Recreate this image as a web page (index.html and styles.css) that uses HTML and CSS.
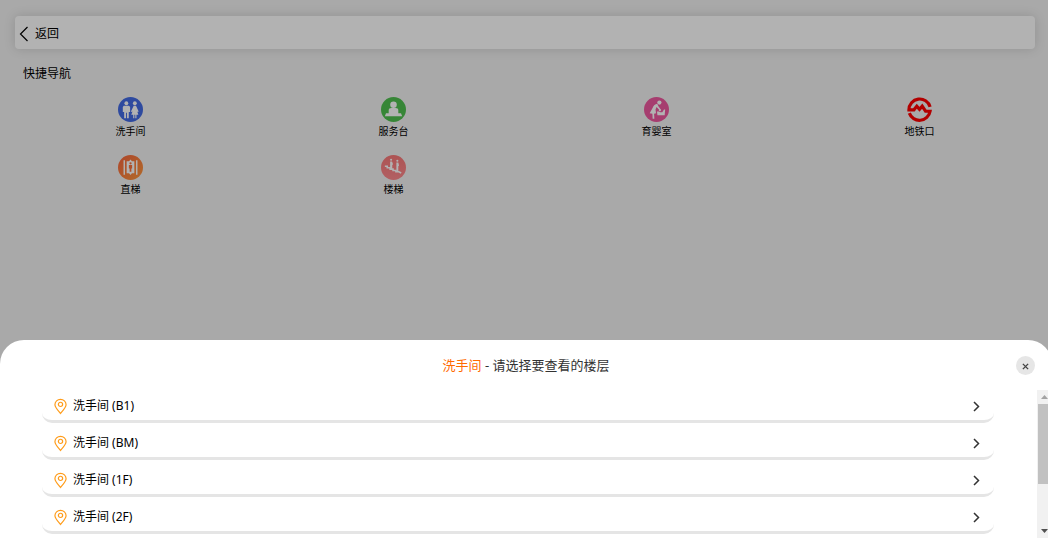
FILE: index.html
```html
<!DOCTYPE html>
<html lang="zh-CN">
<head>
<meta charset="utf-8">
<title>快捷导航</title>
<link rel="stylesheet" href="styles.css">
</head>
<body>
<main class="page">
  <header class="topbar">
    <button class="back" type="button">
      <svg class="back-icon" viewBox="0 0 10 16" aria-hidden="true"><path d="M8.500 1L1.500 8l7 7"/></svg>
      <span>返回</span>
    </button>
  </header>
  <h1 class="heading">快捷导航</h1>
  <nav class="grid">
    <a class="tile" href="#toilet">
      <svg class="tile-icon" viewBox="0 0 26 26" aria-hidden="true"><circle cx="13" cy="13" r="13" fill="#436ae4"/><g fill="#fff"><circle cx="8.700" cy="6.500" r="2"/><circle cx="17.500" cy="6.500" r="2"/><path d="M6 9h5.400l1.200 1.300v5.200h-1.400v6.500H9.300v-5.500h-1V22H6.400v-6.500H5v-5.200zM16.300 9h2.400l2.800 6-1 .6-.6-.8 1.300 3.700h-2V22h-1.200v-3.500h-1V22h-1.200v-3.500h-2l1.400-3.700-.7.800-1-.6z"/></g></svg>
      <span>洗手间</span>
    </a>
    <a class="tile" href="#service">
      <svg class="tile-icon" viewBox="0 0 26 26" aria-hidden="true"><circle cx="13" cy="13" r="13" fill="#50c150"/><g fill="#fff"><circle cx="13" cy="8" r="3.400"/><path d="M8 17v-3q0-2.500 2.800-2.500h4.400q2.800 0 2.800 2.500v3h2.800l1.200 3H4l1.200-3z"/></g></svg>
      <span>服务台</span>
    </a>
    <a class="tile" href="#nursery">
      <svg class="tile-icon" viewBox="0 0 26 26" aria-hidden="true"><circle cx="13" cy="13" r="13" fill="#ee589f"/><g fill="#fff"><circle cx="16" cy="5.800" r="2.200"/><path d="M13.800 7l1.200 2.500 2.800 4-1 .7-3.800-3.700-1 2.500.5 4-2 .3.300 5.200H9l-.3-5.200-2.800-.3 3-5.500q1.500-4.200 4.900-4.500zM13.500 15h2l1.300.8h2.200l1.800-2.800h1.200l-.5 6h-7.500z"/><circle cx="16.500" cy="13.800" r="1.100"/></g></svg>
      <span>育婴室</span>
    </a>
    <a class="tile" href="#metro">
      <svg class="tile-icon" viewBox="0 0 26 26" aria-hidden="true"><path d="M24 10.300A11.200 11.200 0 0 0 2 13.300h5.200l3-3.800 2.800 3.300 2.800-3.300 3.500 5.300H24A11.200 11.200 0 0 1 2.400 16.800" fill="none" stroke="#f00" stroke-width="3.300"/></svg>
      <span>地铁口</span>
    </a>
    <a class="tile" href="#lift">
      <svg class="tile-icon" viewBox="0 0 26 26" aria-hidden="true"><defs><linearGradient id="lift" x1="0" y1="0" x2="1" y2="1"><stop offset="0" stop-color="#f9653e"/><stop offset="1" stop-color="#ff9a3d"/></linearGradient></defs><circle cx="13" cy="13" r="13" fill="url(#lift)"/><path d="M6.500 5.500v15M19.500 5.500v15" stroke="#fff" stroke-width="1.500"/><path d="M9 6.500h2.500L13 4.800l1.500 1.700H17v12.500h-2.500L13 20.700 11.500 19H9z" fill="#fff"/><g fill="#f9733e"><circle cx="13" cy="8.700" r="1.200"/><path d="M11.300 10.400h3.400v3.600h-.8v3.500h-1.800V14h-.8z"/></g></svg>
      <span>直梯</span>
    </a>
    <a class="tile" href="#stairs">
      <svg class="tile-icon" viewBox="0 0 26 26" aria-hidden="true"><defs><linearGradient id="stairs" x1="0" y1="0" x2="0" y2="1"><stop offset="0" stop-color="#f87878"/><stop offset="1" stop-color="#ff8a8e"/></linearGradient></defs><circle cx="13" cy="13" r="13" fill="url(#stairs)"/><path d="M4 11.800h2.500v1.500h3v1.400h3v1.400h3v1.300h3l2.500 1.300" fill="none" stroke="#fff" stroke-width="1.600"/><g fill="#fff"><circle cx="10.500" cy="5" r="1.100"/><path d="M9.500 6.700h2l1 3-.8.600v4.500H9.500z"/><circle cx="17" cy="6" r="1.100"/><path d="M16 7.700h2l.8 3.300-.8.700v5.600h-2z"/></g></svg>
      <span>楼梯</span>
    </a>
  </nav>
</main>

<div class="mask">
  <section class="sheet" role="dialog" aria-labelledby="sheet-title">
    <div class="sheet-head">
      <h2 class="sheet-title" id="sheet-title"><span class="accent">洗手间</span> - 请选择要查看的楼层</h2>
      <button class="close" type="button" aria-label="关闭"><svg viewBox="0 0 8 8" aria-hidden="true"><path d="M1 1l6 6M7 1L1 7"/></svg></button>
    </div>
    <div class="sheet-body">
      <div class="floors">
        <button class="floor" type="button"><svg class="pin" viewBox="0 0 14 17" aria-hidden="true"><path d="M7 16C3.500 11.800 1 9 1 6.500a6 5.700 0 0 1 12 0C13 9 10.500 11.800 7 16z"/><circle cx="7" cy="6.200" r="2.300"/></svg><span class="floor-name">洗手间 (B1)</span><svg class="chevron" viewBox="0 0 7 11" aria-hidden="true"><path d="M1 1l4.500 4.500L1 10"/></svg></button>
        <button class="floor" type="button"><svg class="pin" viewBox="0 0 14 17" aria-hidden="true"><path d="M7 16C3.500 11.800 1 9 1 6.500a6 5.700 0 0 1 12 0C13 9 10.500 11.800 7 16z"/><circle cx="7" cy="6.200" r="2.300"/></svg><span class="floor-name">洗手间 (BM)</span><svg class="chevron" viewBox="0 0 7 11" aria-hidden="true"><path d="M1 1l4.500 4.500L1 10"/></svg></button>
        <button class="floor" type="button"><svg class="pin" viewBox="0 0 14 17" aria-hidden="true"><path d="M7 16C3.500 11.800 1 9 1 6.500a6 5.700 0 0 1 12 0C13 9 10.500 11.800 7 16z"/><circle cx="7" cy="6.200" r="2.300"/></svg><span class="floor-name">洗手间 (1F)</span><svg class="chevron" viewBox="0 0 7 11" aria-hidden="true"><path d="M1 1l4.500 4.500L1 10"/></svg></button>
        <button class="floor" type="button"><svg class="pin" viewBox="0 0 14 17" aria-hidden="true"><path d="M7 16C3.500 11.800 1 9 1 6.500a6 5.700 0 0 1 12 0C13 9 10.500 11.800 7 16z"/><circle cx="7" cy="6.200" r="2.300"/></svg><span class="floor-name">洗手间 (2F)</span><svg class="chevron" viewBox="0 0 7 11" aria-hidden="true"><path d="M1 1l4.500 4.500L1 10"/></svg></button>
      </div>
      <div class="scrollbar" aria-hidden="true">
        <span class="arrow arrow-up"></span>
        <span class="thumb"></span>
        <span class="arrow arrow-down"></span>
      </div>
    </div>
  </section>
</div>
</body>
</html>
```

FILE: styles.css
```css
* {
  box-sizing: border-box;
}

body {
  margin: 0;
  min-height: 100vh;
  overflow: hidden;
  background: #f2f2f2;
  color: #000;
  font-family: "Noto Sans", "Noto Sans CJK SC", sans-serif;
  font-size: 12px;
  line-height: 18px;
}

button {
  border: 0;
  padding: 0;
  background: none;
  color: inherit;
  font: inherit;
  cursor: pointer;
}

.page {
  padding-top: 16px;
}

.topbar {
  margin: 0 13px 0 15px;
  padding: 2px 4px 0;
  height: 33px;
  display: flex;
  align-items: center;
  border-radius: 4px;
  background: #fff;
  box-shadow: 0 0 12px rgba(0, 0, 0, 0.14);
}

.back {
  display: flex;
  align-items: center;
  gap: 6px;
}

.back-icon {
  width: 10px;
  height: 16px;
  fill: none;
  stroke: #000;
  stroke-width: 1.2;
}

.heading {
  margin: 16px 23px 14px;
  font-size: 12px;
  font-weight: 400;
}

.grid {
  margin: 0 -3px 0 -1px;
  display: grid;
  grid-template-columns: repeat(4, 1fr);
  row-gap: 16px;
}

.tile {
  display: flex;
  flex-direction: column;
  align-items: center;
  gap: 1px;
  color: #000;
  font-size: 10px;
  line-height: 16px;
  text-decoration: none;
}

.tile-icon {
  width: 25px;
  height: 25px;
}

.tile span {
  padding-top: 1px;
  line-height: 15px;
}

.mask {
  position: fixed;
  inset: 0;
  display: flex;
  flex-direction: column;
  justify-content: flex-end;
  background: rgba(0, 0, 0, 0.3);
}

.sheet {
  margin-right: -4px;
  padding-bottom: 7px;
  border-radius: 24px 24px 0 0;
  background: #fff;
}

.sheet-head {
  height: 50px;
  padding: 0 17px;
  display: grid;
  grid-template-columns: 19px 1fr 19px;
  align-items: center;
}

.sheet-title {
  grid-column: 2;
  margin: 0;
  color: #333;
  font-size: 13px;
  font-weight: 400;
  text-align: center;
}

.accent {
  color: #ff6a00;
}

.close {
  width: 19px;
  height: 19px;
  padding-top: 2px;
  display: grid;
  place-items: center;
  border-radius: 50%;
  background: #e6e6e6;
}

.close svg {
  width: 7px;
  height: 7px;
  fill: none;
  stroke: #444;
  stroke-width: 1.6;
}

.sheet-body {
  display: flex;
}

.floors {
  flex: 1;
  padding: 0 43px 4px 42px;
  display: flex;
  flex-direction: column;
  gap: 4px;
}

.floor {
  height: 33px;
  padding: 2px 14px 0 12px;
  display: flex;
  align-items: center;
  gap: 6px;
  border-bottom: 3px solid #e5e5e5;
  border-radius: 10px;
  text-align: left;
}

.pin {
  width: 13px;
  height: 17px;
  fill: none;
  stroke: #ff9c1a;
  stroke-width: 1.3;
}

.floor-name {
  flex: 1;
}

.chevron {
  width: 7px;
  height: 11px;
  fill: none;
  stroke: #333;
  stroke-width: 1.5;
}

.scrollbar {
  width: 15px;
  display: flex;
  flex-direction: column;
  align-items: center;
  background: #f1f1f1;
}

.arrow {
  width: 7px;
  height: 4px;
  margin: 5px 0;
  background: #a3a3a3;
  clip-path: polygon(50% 0, 100% 100%, 0 100%);
}

.arrow-down {
  margin-top: auto;
  background: #505050;
  clip-path: polygon(0 0, 100% 0, 50% 100%);
}

.thumb {
  width: 13px;
  height: 80px;
  background: #c1c1c1;
}
```
